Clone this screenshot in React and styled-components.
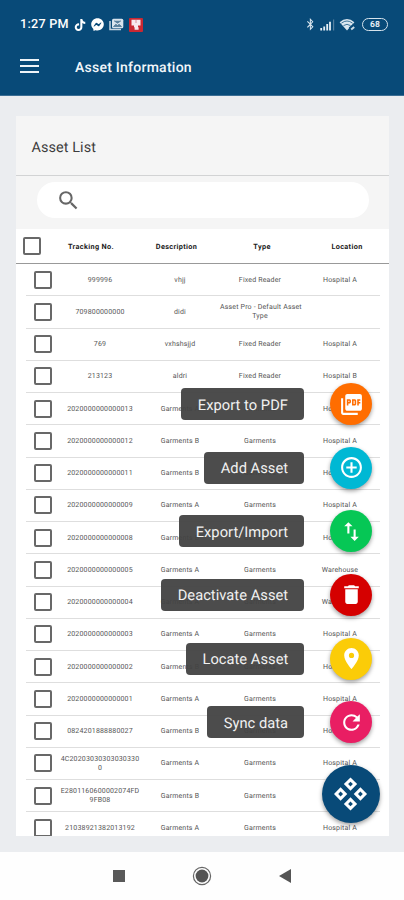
import React from "react";
import styled, { createGlobalStyle } from "styled-components";
import {
  MdAddCircleOutline,
  MdDelete,
  MdImportExport,
  MdPictureAsPdf,
  MdPlace,
  MdRefresh,
  MdSearch,
} from "react-icons/md";
import { FaBluetoothB, FaFacebookMessenger, FaTiktok } from "react-icons/fa";

const GlobalStyle = createGlobalStyle`
  * { box-sizing: border-box; }
  body {
    margin: 0;
    font-family: Roboto, "Liberation Sans", sans-serif;
    text-rendering: geometricPrecision;
  }
`;

const Screen = styled.div`
  position: relative;
  display: flex;
  flex-direction: column;
  width: 404px;
  height: 900px;
  overflow: hidden;
  background: #ebedf0;
`;

const Header = styled.header`
  flex: none;
  height: 96px;
  background: #084a78;
  border-bottom: 1px solid #3b6e94;
  color: #f1f6fa;
`;

const StatusBar = styled.div`
  display: flex;
  align-items: center;
  justify-content: space-between;
  height: 49px;
  padding: 0 16px 0 20px;
`;

const StatusGroup = styled.div`
  display: flex;
  align-items: center;
  gap: ${(p) => p.$gap}px;
  color: ${(p) => p.$color || "#fff"};
  svg { flex: none; display: block; }
`;

const Clock = styled.span`
  width: 48px;
  font-size: 12.6px;
  font-weight: 500;
  letter-spacing: 0.25px;
  white-space: nowrap;
  margin-right: 1px;
`;

const TitleBar = styled.div`
  display: flex;
  align-items: center;
  height: 34px;
  padding-left: 20px;
  gap: 36px;
`;

const MenuButton = styled.button`
  display: flex;
  flex-direction: column;
  gap: 4px;
  width: 19px;
  padding: 0;
  border: 0;
  background: none;
`;

const MenuLine = styled.span`
  height: 2px;
  background: #eef4f8;
`;

const PageTitle = styled.h1`
  margin: 3px 0 0;
  font-size: 14px;
  font-weight: 500;
  letter-spacing: 0.25px;
  white-space: nowrap;
`;

const Main = styled.main`
  flex: none;
  height: 756px;
  padding: 20px 15px 16px 16px;
`;

const Card = styled.section`
  display: flex;
  flex-direction: column;
  height: 720px;
  background: #fff;
  overflow: hidden;
`;

const CardHeader = styled.div`
  flex: none;
  display: flex;
  align-items: center;
  height: 60px;
  padding: 3px 0 0 15.5px;
  background: #f5f5f5;
  border-bottom: 1px solid #d2d3d4;
  color: #3d3d3d;
  font-size: 14.4px;
  letter-spacing: 0.1px;
`;

const SearchArea = styled.div`
  flex: none;
  height: 53px;
  padding: 6px 20px 0 21px;
  background: #f5f5f5;
`;

const SearchField = styled.div`
  display: flex;
  align-items: center;
  height: 36px;
  padding-left: 19px;
  border-radius: 18px;
  background: #fff;
  color: #666;
`;

const Checkbox = styled.span`
  flex: none;
  display: block;
  width: 18px;
  height: 18px;
  border: 2px solid #686868;
  border-radius: 2px;
  background: #fff;
`;

const TableHead = styled.div`
  flex: none;
  display: grid;
  grid-template-columns: 34px 82px 89px 82px 88px;
  align-items: center;
  height: 35px;
  border-bottom: 1.5px solid #999;
  color: #222;
  font-size: 7.3px;
  font-weight: 700;
  letter-spacing: 0.35px;
  text-align: center;
  ${Checkbox} { margin: -1px 0 0 7px; }
`;

const TableRow = styled.div`
  flex: none;
  display: grid;
  grid-template-columns: 34px repeat(4, 80px);
  align-items: center;
  height: 32.26px;
  margin: 0 9px 0 10px;
  border-bottom: 1px solid #dedede;
  ${Checkbox} { margin-left: 8px; }
`;

const Cell = styled.span`
  padding-top: 1px;
  color: #555;
  font-size: 7px;
  line-height: 9px;
  letter-spacing: 0.17px;
  text-align: center;
  white-space: pre;
`;

const Actions = styled.div`
  position: absolute;
  right: 24px;
  top: 383px;
  display: flex;
  flex-direction: column;
  align-items: flex-end;
`;

const ActionRow = styled.div`
  display: flex;
  align-items: center;
  height: 42px;
  margin: 0 8px 21.65px 0;
`;

const ActionLabel = styled.span`
  display: flex;
  align-items: center;
  justify-content: center;
  width: ${(p) => p.$width}px;
  height: 32px;
  margin-right: 25.6px;
  padding-top: 1px;
  border-radius: 4px;
  background: rgba(66, 66, 66, 0.95);
  color: #f1f1f1;
  font-size: 14.7px;
  letter-spacing: 0.03px;
  white-space: nowrap;
`;

const Fab = styled.button`
  display: flex;
  align-items: center;
  justify-content: center;
  width: ${(p) => p.$size}px;
  height: ${(p) => p.$size}px;
  padding: 0;
  border: 0;
  border-radius: 50%;
  background: ${(p) => p.$color};
  color: #fff;
  box-shadow: 0 2px 4px rgba(0, 0, 0, 0.38);
`;

const NavBar = styled.nav`
  flex: 1;
  display: flex;
  justify-content: center;
  align-items: center;
  gap: 67px;
  background: #fefefe;
  svg { display: block; }
`;

const rows = [
  ["999996", "vhjj", "Fixed Reader", "Hospital A"],
  ["709800000000", "didi", "Asset Pro - Default Asset\nType", ""],
  ["769", "vxhshsjjd", "Fixed Reader", "Hospital A"],
  ["213123", "aldri", "Fixed Reader", "Hospital B"],
  ["2020000000000013", "Garments A", "Garments", "Hospital A"],
  ["2020000000000012", "Garments B", "Garments", "Hospital A"],
  ["2020000000000011", "Garments B", "Garments", "Hospital A"],
  ["2020000000000009", "Garments A", "Garments", "Hospital A"],
  ["2020000000000008", "Garments B", "Garments", "Hospital A"],
  ["2020000000000005", "Garments A", "Garments", "Warehouse"],
  ["2020000000000004", "Garments A", "Garments", "Warehouse"],
  ["2020000000000003", "Garments A", "Garments", "Hospital A"],
  ["2020000000000002", "Garments B", "Garments", "Hospital A"],
  ["2020000000000001", "Garments A", "Garments", "Hospital A"],
  ["0824201888880027", "Garments B", "Garments", "Hospital A"],
  ["4C20203030303030330\n0", "Garments A", "Garments", "Hospital A"],
  ["E2801160600002074FD\n9FB08", "Garments B", "Garments", "Hospital A"],
  ["21038921382013192", "Garments A", "Garments", "Hospital A"],
];

const actions = [
  { label: "Export to PDF", width: 123, color: "#ff6d00", Icon: MdPictureAsPdf },
  { label: "Add Asset", width: 100, color: "#00b8d4", Icon: MdAddCircleOutline },
  { label: "Export/Import", width: 125, color: "#06c755", Icon: MdImportExport },
  { label: "Deactivate Asset", width: 143, color: "#d50000", Icon: MdDelete },
  { label: "Locate Asset", width: 118, color: "#fbcc08", Icon: MdPlace },
  { label: "Sync data", width: 97, color: "#e91e63", Icon: MdRefresh },
];

const GalleryIcon = () => (
  <svg width="15" height="13" viewBox="0 0 15 13">
    <path d="M1 3v8.5h11" fill="none" stroke="#c5d5e1" strokeWidth="1.5" />
    <rect x="3" y="0.7" width="11.3" height="9.5" rx="1.5" fill="#d8e4ed" />
    <path d="M5 2.8l3.5 2.4L12 2.8M4.5 8.5l2.4-2.3 1.6 1.3 1.6-1.3 2.4 2.3z" fill="#5b83a1" stroke="#48718f" strokeWidth="0.7" />
  </svg>
);

const RedAppIcon = () => (
  <svg width="14" height="14" viewBox="0 0 14 14">
    <rect width="14" height="14" rx="1" fill="#c92832" />
    <path d="M2.5 1.8h9v5.7H9V9.2h.6v2.6H5.6V9.2H5V7.5H2.5z" fill="#f7e8ed" />
    <path d="M7 2v3" stroke="#d8909c" strokeWidth="1" />
  </svg>
);

const SignalIcon = () => (
  <svg width="15" height="12" viewBox="0 0 15 12">
    <path d="M1.2 9v2.5M4.2 7.5v4M7.2 5v6.5M10 2.7v8.8" stroke="#e6eff6" strokeWidth="1.8" />
    <path d="M13.6 0.5v11" stroke="#527e9e" strokeWidth="1.2" />
  </svg>
);

const WifiIcon = () => (
  <svg width="17" height="13" viewBox="0 0 17 13">
    <path d="M0.6 4.2Q8-2.2 15.4 4.2L8 12.4z" fill="#d9e6ef" />
    <path d="M2.4 5.2Q8 0.8 13.6 5.2M4.5 7.6Q8 5 11.5 7.6" fill="none" stroke="#316a92" strokeWidth="0.9" />
    <path d="M11 11.2l4.5-3.5" stroke="#084a78" strokeWidth="4" />
    <path d="M12.2 11.6l3-2.6" stroke="#cbdce8" strokeWidth="2" />
  </svg>
);

const Battery = styled.span`
  display: flex;
  align-items: center;
  justify-content: center;
  width: 26px;
  height: 13px;
  margin-left: 2px;
  border: 1.5px solid #d6e3ec;
  border-radius: 7px;
  color: #e4edf4;
  font-size: 8.5px;
  font-weight: 700;
`;

const DiamondsIcon = () => (
  <svg width="34" height="34" viewBox="-16.5 -17 34 34" fill="none" stroke="#fff" strokeWidth="3">
    <g transform="rotate(45)">
      <rect x="-10.2" y="-10.2" width="6.4" height="6.4" />
      <rect x="3.8" y="-10.2" width="6.4" height="6.4" />
      <rect x="-10.2" y="3.8" width="6.4" height="6.4" />
      <rect x="3.8" y="3.8" width="6.4" height="6.4" />
    </g>
  </svg>
);

export default function App() {
  return (
    <Screen>
      <GlobalStyle />
      <Header>
        <StatusBar>
          <StatusGroup $gap={5}>
            <Clock>1:27 PM</Clock>
            <FaTiktok size={12} />
            <FaFacebookMessenger size={13} />
            <GalleryIcon />
            <RedAppIcon />
          </StatusGroup>
          <StatusGroup $gap={4} $color="#d8e5ee">
            <FaBluetoothB size={12.5} />
            <SignalIcon />
            <WifiIcon />
            <Battery>68</Battery>
          </StatusGroup>
        </StatusBar>
        <TitleBar>
          <MenuButton aria-label="Menu">
            <MenuLine />
            <MenuLine />
            <MenuLine />
          </MenuButton>
          <PageTitle>Asset Information</PageTitle>
        </TitleBar>
      </Header>
      <Main>
        <Card>
          <CardHeader>Asset List</CardHeader>
          <SearchArea>
            <SearchField>
              <MdSearch size={25} />
            </SearchField>
          </SearchArea>
          <TableHead>
            <Checkbox />
            <span>Tracking No.</span>
            <span>Description</span>
            <span>Type</span>
            <span>Location</span>
          </TableHead>
          {rows.map(([tracking, description, type, location]) => (
            <TableRow key={tracking}>
              <Checkbox />
              <Cell>{tracking}</Cell>
              <Cell>{description}</Cell>
              <Cell>{type}</Cell>
              <Cell>{location}</Cell>
            </TableRow>
          ))}
        </Card>
      </Main>
      <NavBar>
        <svg width="12" height="12"><rect width="12" height="12" fill="#595959" /></svg>
        <svg width="20" height="20" viewBox="0 0 20 20">
          <circle cx="10" cy="10" r="8.6" fill="none" stroke="#666" strokeWidth="1.2" />
          <circle cx="10" cy="10" r="6.4" fill="#555" />
        </svg>
        <svg width="12" height="14"><path d="M12 0v14L0 7z" fill="#555" /></svg>
      </NavBar>
      <Actions>
        {actions.map(({ label, width, color, Icon }) => (
          <ActionRow key={label}>
            <ActionLabel $width={width}>{label}</ActionLabel>
            <Fab $size={42} $color={color} aria-label={label}>
              <Icon size={25} />
            </Fab>
          </ActionRow>
        ))}
        <Fab $size={58} $color="#084a78" aria-label="Actions">
          <DiamondsIcon />
        </Fab>
      </Actions>
    </Screen>
  );
}
